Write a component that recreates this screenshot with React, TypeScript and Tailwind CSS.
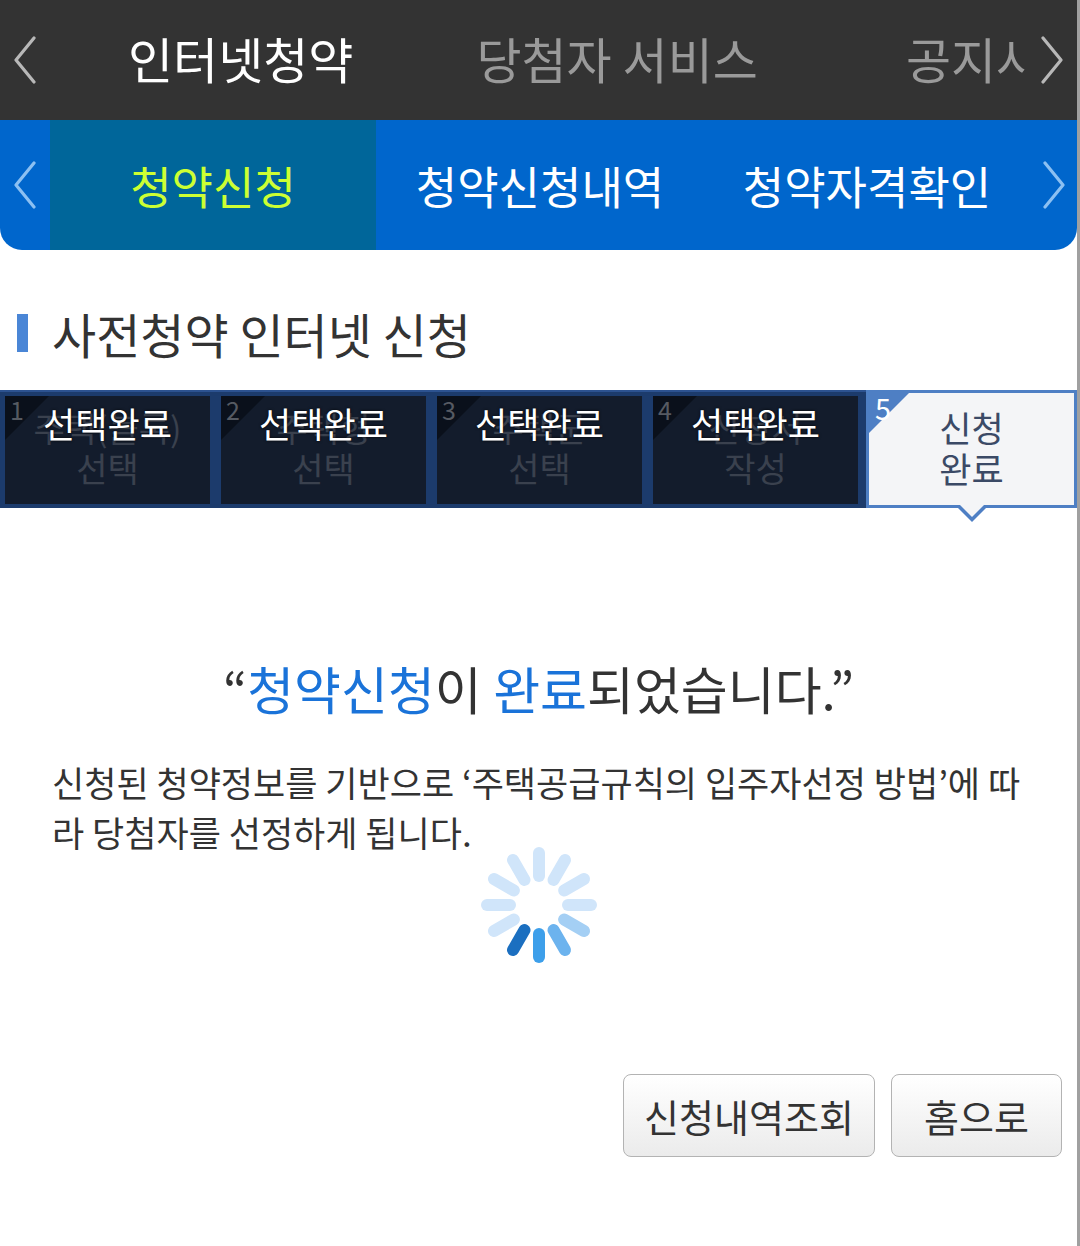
import React from 'react';

const Chevron = ({ dir, color, className }: { dir: 'left' | 'right'; color: string; className?: string }) => (
  <svg width="26" height="48" viewBox="0 0 26 48" className={className}>
    <path
      d={dir === 'left' ? 'M22 2 L4 24 L22 46' : 'M4 2 L22 24 L4 46'}
      fill="none"
      stroke={color}
      strokeWidth="3.2"
      strokeLinecap="round"
      strokeLinejoin="round"
    />
  </svg>
);

const steps = [
  { n: 1, top: '주택(블록)', bottom: '선택' },
  { n: 2, top: '주택형', bottom: '선택' },
  { n: 3, top: '주택군', bottom: '선택' },
  { n: 4, top: '신청서', bottom: '작성' },
];

const Spinner = () => {
  const colors: Record<number, string> = {
    7: '#1b6fc0',
    6: '#3d9fea',
    5: '#6cb3ee',
    4: '#a4cff4',
  };
  return (
    <svg width="140" height="140" viewBox="-70 -70 140 140">
      {Array.from({ length: 12 }).map((_, i) => {
        const a = (i * 30 * Math.PI) / 180;
        const sx = Math.sin(a);
        const sy = -Math.cos(a);
        return (
          <line
            key={i}
            x1={sx * 29}
            y1={sy * 29}
            x2={sx * 52}
            y2={sy * 52}
            stroke={colors[i] ?? '#d0e5fa'}
            strokeWidth="12"
            strokeLinecap="round"
          />
        );
      })}
    </svg>
  );
};

export default function App() {
  return (
    <div className="w-[1080px] h-[1246px] bg-white overflow-hidden font-['Noto_Sans_CJK_KR','Noto_Sans',sans-serif]">
      <div className="w-[1077px] h-full border-r-[3px] border-[#a0a0a0] box-content flex flex-col">
        {/* top menu */}
        <div className="h-[120px] bg-[#333333] flex items-center">
          <div className="w-[50px] flex justify-center">
            <Chevron dir="left" color="#b8b8b8" />
          </div>
          <div className="w-[977px] pb-[6px] overflow-hidden flex items-center whitespace-nowrap text-[49px] leading-none">
            <span className="ml-[78px] text-white">인터넷청약</span>
            <span className="ml-[123px] text-[#9a9a9a]">당첨자 서비스</span>
            <span className="ml-[148px] text-[#9a9a9a]">공지사항</span>
          </div>
          <div className="flex-1 flex justify-center">
            <Chevron dir="right" color="#b8b8b8" />
          </div>
        </div>

        {/* sub tabs */}
        <div className="h-[130px] bg-[#0066cc] rounded-b-[22px] flex items-stretch">
          <div className="w-[50px] flex items-center justify-center">
            <Chevron dir="left" color="#8cc0f2" />
          </div>
          <div className="w-[980px] flex text-[45px] leading-none whitespace-nowrap">
            <div className="w-[326px] bg-[#00669a] flex items-center justify-center text-[#ccff33]">청약신청</div>
            <div className="w-[328px] flex items-center justify-center text-white">청약신청내역</div>
            <div className="w-[326px] flex items-center justify-center text-white">청약자격확인</div>
          </div>
          <div className="flex-1 flex items-center justify-center">
            <Chevron dir="right" color="#8cc0f2" />
          </div>
        </div>

        {/* heading */}
        <div className="mt-[62px] h-[42px] flex items-center">
          <div className="ml-[17px] w-[11px] h-[38px] bg-[#4a86d6]"></div>
          <h1 className="ml-[24px] text-[48px] leading-none text-[#333333] whitespace-nowrap">사전청약 인터넷 신청</h1>
        </div>

        {/* steps */}
        <div className="mt-[36px] h-[118px] bg-[#1c3b6c] border-t-2 border-[#2c5290] flex items-stretch relative">
          <div className="flex gap-[11px] pl-[5px] py-[4px]">
            {steps.map((s) => (
              <div key={s.n} className="relative w-[205px] bg-[#131c2c] overflow-hidden">
                <div className="absolute top-0 left-0 w-0 h-0 border-t-[44px] border-r-[44px] border-t-[#0a101b] border-r-transparent"></div>
                <span className="absolute left-[5px] top-[1px] text-[25px] leading-none text-[#565a62]">{s.n}</span>
                <div className="flex flex-col items-center pt-[12px] text-[34px] leading-[40px] text-[#3a414e] whitespace-nowrap">
                  <span>{s.top}</span>
                  <span>{s.bottom}</span>
                </div>
                <div className="absolute top-[9px] left-0 right-0 text-center text-[35px] leading-none text-white whitespace-nowrap [text-shadow:0_0_3px_rgba(0,0,0,0.9)]">
                  선택완료
                </div>
              </div>
            ))}
          </div>
          <div className="ml-[8px] flex-1 relative -mt-[2px] border-[3px] border-[#4e7fc4] bg-[#f4f5f7]">
            <div className="absolute -top-px -left-px w-0 h-0 border-t-[42px] border-r-[42px] border-t-[#4e7fc4] border-r-transparent"></div>
            <span className="absolute left-[6px] top-[0px] text-[29px] leading-none text-white">5</span>
            <div className="flex flex-col items-center pt-[13px] text-[35px] leading-[41px] text-[#3b4a66]">
              <span>신청</span>
              <span>완료</span>
            </div>
            <div className="absolute left-1/2 -translate-x-1/2 -bottom-[17px] w-0 h-0 border-l-[16px] border-r-[16px] border-t-[16px] border-l-transparent border-r-transparent border-t-[#4e7fc4]"></div>
            <div className="absolute left-1/2 -translate-x-1/2 -bottom-[12px] w-0 h-0 border-l-[12px] border-r-[12px] border-t-[12px] border-l-transparent border-r-transparent border-t-[#f4f5f7]"></div>
          </div>
        </div>

        {/* message */}
        <p className="mt-[155px] text-center text-[51px] leading-none text-[#333333] whitespace-nowrap">
          “<span className="text-[#1a73d9]">청약신청</span>이 <span className="text-[#1a73d9]">완료</span>되었습니다.”
        </p>

        <p className="mt-[43px] ml-[52px] text-[35px] leading-[50px] text-[#333333] whitespace-nowrap">
          신청된 청약정보를 기반으로 ‘주택공급규칙의 입주자선정 방법’에 따
          <br />
          라 당첨자를 선정하게 됩니다.
        </p>

        <div className="-mt-[22px] flex justify-center">
          <Spinner />
        </div>

        {/* buttons */}
        <div className="mt-[99px] flex justify-end gap-[16px] pr-[15px]">
          <button className="w-[252px] h-[83px] rounded-[8px] border border-[#b3b3b3] bg-gradient-to-b from-white to-[#ebebeb] text-[38px] text-[#333333] leading-none">
            신청내역조회
          </button>
          <button className="w-[171px] h-[83px] rounded-[8px] border border-[#b3b3b3] bg-gradient-to-b from-white to-[#ebebeb] text-[38px] text-[#333333] leading-none">
            홈으로
          </button>
        </div>
      </div>
    </div>
  );
}
